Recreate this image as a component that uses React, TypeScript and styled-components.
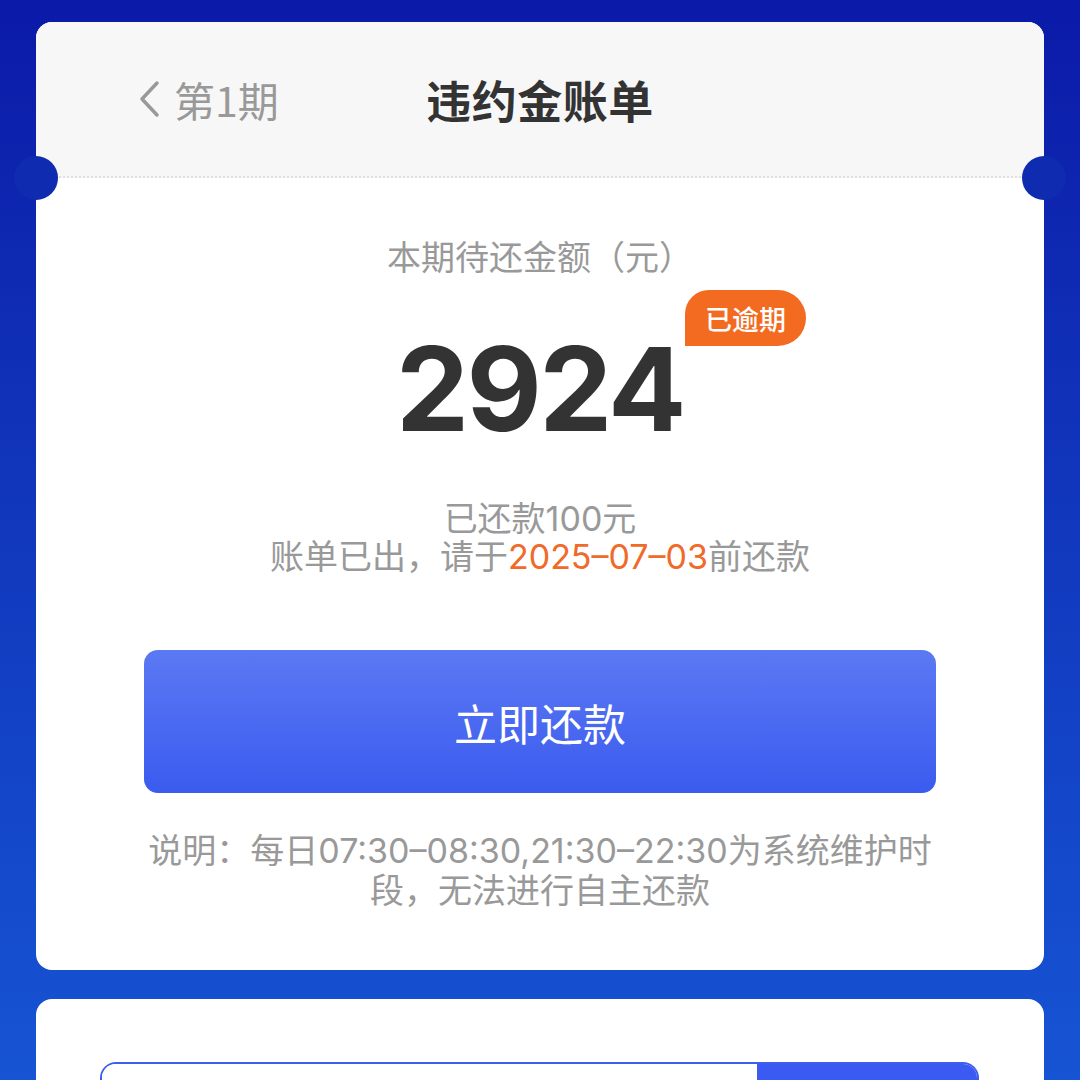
import React from "react";
import styled, { createGlobalStyle } from "styled-components";

const GlobalStyle = createGlobalStyle`
  html, body {
    margin: 0;
    padding: 0;
  }
  body {
    width: 1080px;
    height: 1080px;
    overflow: hidden;
    font-family: "Inter", "Noto Sans CJK SC", sans-serif;
    background: linear-gradient(180deg, #0b1aa8 0%, #1033b9 40%, #1654d4 100%);
  }
`;

const Page = styled.div`
  box-sizing: border-box;
  width: 1080px;
  height: 1080px;
  overflow: hidden;
  padding: 22px 36px 0;
  display: flex;
  flex-direction: column;
  gap: 29px;
`;

const Card = styled.section`
  position: relative;
  flex-shrink: 0;
  background: #ffffff;
  border-radius: 16px;
`;

const Header = styled.header`
  position: relative;
  height: 156px;
  box-sizing: border-box;
  background: #f7f7f7;
  border-radius: 16px 16px 0 0;
  border-bottom: 2px dotted #e0e0e0;
  display: grid;
  grid-template-columns: 1fr auto 1fr;
  align-items: center;
  padding: 0 0 0 102px;

  &::before,
  &::after {
    content: "";
    position: absolute;
    top: 134px;
    width: 44px;
    height: 44px;
    border-radius: 50%;
    background: #0f2bb0;
  }
  &::before {
    left: -22px;
  }
  &::after {
    right: -22px;
  }
`;

const Back = styled.div`
  display: flex;
  align-items: center;
  gap: 14px;
  color: #999999;
  font-family: "Noto Sans CJK SC", sans-serif;
  font-size: 41px;
  justify-self: start;
`;

const Title = styled.h1`
  margin: 0 0 0 -102px;
  font-family: "Noto Sans CJK SC", sans-serif;
  font-size: 45px;
  font-weight: 700;
  color: #333333;
  letter-spacing: 0.5px;
`;

const Body = styled.div`
  display: flex;
  flex-direction: column;
  align-items: center;
  padding: 58px 108px 59px;
`;

const Label = styled.div`
  font-size: 34px;
  line-height: 44px;
  color: #999999;
`;

const AmountRow = styled.div`
  position: relative;
  margin-top: 44px;
`;

const Amount = styled.div`
  font-family: "Inter", sans-serif;
  font-size: 116px;
  font-weight: 700;
  line-height: 130px;
  color: #333333;
  letter-spacing: -2.5px;
`;

const Badge = styled.span`
  position: absolute;
  left: calc(100% + 1px);
  top: -34px;
  height: 56px;
  padding: 0 20px;
  display: flex;
  align-items: center;
  background: #f26b21;
  color: #ffffff;
  font-family: "Noto Sans CJK SC", sans-serif;
  font-size: 27px;
  font-weight: 500;
  white-space: nowrap;
  border-radius: 24px 28px 28px 0;
`;

const Info = styled.div`
  margin-top: 46px;
  text-align: center;
  font-size: 34px;
  line-height: 38px;
  color: #999999;
`;

const Highlight = styled.span`
  color: #f06a2a;
`;

const PayButton = styled.button`
  margin-top: 74px;
  width: 100%;
  height: 143px;
  border: none;
  border-radius: 14px;
  background: linear-gradient(180deg, #5b79f3 0%, #3b5bef 100%);
  color: #ffffff;
  font-family: "Noto Sans CJK SC", sans-serif;
  font-size: 43px;
  cursor: pointer;
`;

const Note = styled.p`
  margin: 38px 0 0;
  text-align: center;
  font-size: 34px;
  line-height: 40px;
  color: #999999;
  white-space: nowrap;
`;

const SecondCard = styled.section`
  background: #ffffff;
  border-radius: 16px 16px 0 0;
  padding: 63px 65px 0 64px;
  flex: 1;
`;

const InputBox = styled.div`
  display: flex;
  height: 80px;
  border: 2px solid #3f5ef0;
  border-bottom: none;
  border-radius: 16px 16px 0 0;
  overflow: hidden;
`;

const InputField = styled.div`
  flex: 1;
  background: #ffffff;
`;

const InputAction = styled.div`
  width: 220px;
  background: #3a5af2;
`;

function ChevronLeft() {
  return (
    <svg width="22" height="38" viewBox="0 0 22 38" fill="none">
      <path d="M19 3 L4 19 L19 35" stroke="#999999" strokeWidth="3.5" strokeLinecap="round" strokeLinejoin="round" />
    </svg>
  );
}

export default function App() {
  return (
    <>
      <GlobalStyle />
      <Page>
        <Card>
          <Header>
            <Back>
              <ChevronLeft />
              <span>第1期</span>
            </Back>
            <Title>违约金账单</Title>
            <div />
          </Header>
          <Body>
            <Label>本期待还金额（元）</Label>
            <AmountRow>
              <Amount>2924</Amount>
              <Badge>已逾期</Badge>
            </AmountRow>
            <Info>
              <div>已还款100元</div>
              <div>
                账单已出，请于<Highlight>2025–07–03</Highlight>前还款
              </div>
            </Info>
            <PayButton>立即还款</PayButton>
            <Note>
              说明：每日07:30–08:30,21:30–22:30为系统维护时
              <br />
              段，无法进行自主还款
            </Note>
          </Body>
        </Card>
        <SecondCard>
          <InputBox>
            <InputField />
            <InputAction />
          </InputBox>
        </SecondCard>
      </Page>
    </>
  );
}
